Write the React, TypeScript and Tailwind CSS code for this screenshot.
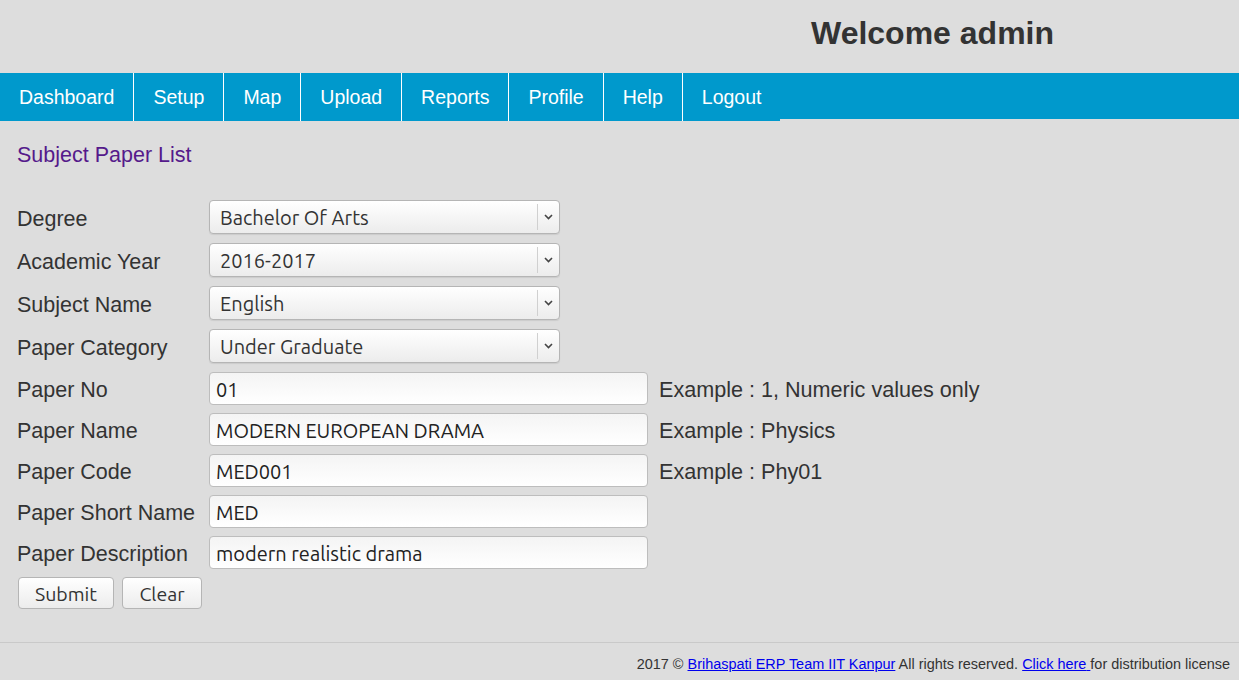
import React from "react";

const navItems = ["Dashboard", "Setup", "Map", "Upload", "Reports", "Profile", "Help", "Logout"];

const selects = [
  { label: "Degree", value: "Bachelor Of Arts" },
  { label: "Academic Year", value: "2016-2017" },
  { label: "Subject Name", value: "English" },
  { label: "Paper Category", value: "Under Graduate" },
];

const inputs = [
  { label: "Paper No", value: "01", hint: "Example : 1, Numeric values only" },
  { label: "Paper Name", value: "MODERN EUROPEAN DRAMA", hint: "Example : Physics" },
  { label: "Paper Code", value: "MED001", hint: "Example : Phy01" },
  { label: "Paper Short Name", value: "MED", hint: "" },
  { label: "Paper Description", value: "modern realistic drama", hint: "" },
];

const ctrlFont = "font-['Ubuntu','Open_Sans',sans-serif]";

function Chevron() {
  return (
    <svg width="9" height="6" viewBox="0 0 9 6" fill="none">
      <path d="M1 1L4.5 4.5L8 1" stroke="#444" strokeWidth="1.6" />
    </svg>
  );
}

export default function App() {
  return (
    <div className="min-h-[680px] bg-[#dddddd] font-['Liberation_Sans',Arial,sans-serif] text-[#333333]">
      {/* header */}
      <div className="h-[73px] flex items-center pl-[811px] pb-[6px]">
        <h1 className="text-[32px] font-bold leading-[37px] text-[#333333]">Welcome admin</h1>
      </div>

      {/* nav */}
      <div className="h-[46px] bg-[#0099cc]">
        <ul className="flex h-[48px]">
          {navItems.map((n) => (
            <li
              key={n}
              className="flex items-center px-[19px] pt-[2px] bg-[#0099cc] border-r border-white last:border-r-0 text-[19.5px] text-white"
            >
              {n}
            </li>
          ))}
        </ul>
      </div>

      {/* content */}
      <div className="px-[17px]">
        <div className="mt-[24px] h-[24px] flex items-center text-[21.5px] text-[#551a8b]">Subject Paper List</div>

        <div className="mt-[33px] flex flex-col">
          {selects.map((s) => (
            <div key={s.label} className="flex items-center h-[34px] mb-[9px]">
              <div className="w-[192px] pt-[4px] text-[21.5px] text-[#333333]">{s.label}</div>
              <div
                className={`flex items-center w-[351px] h-[34px] rounded-[4px] border border-[#b5b5b5] bg-gradient-to-b from-white to-[#ececec] shadow-[0_1px_1px_rgba(0,0,0,0.08)] ${ctrlFont}`}
              >
                <div className="flex-1 pl-[10px] pt-[2px] text-[20px] text-[#333333]">{s.value}</div>
                <div className="w-px h-[26px] bg-[#d0d0d0]" />
                <div className="w-[21px] flex justify-center">
                  <Chevron />
                </div>
              </div>
            </div>
          ))}

          {inputs.map((r) => (
            <div key={r.label} className="flex items-center h-[33px] mb-[8px]">
              <div className="w-[192px] pt-[3px] text-[21.5px] text-[#333333] whitespace-nowrap">{r.label}</div>
              <div
                className={`flex items-center w-[439px] h-[33px] rounded-[4px] border border-[#bdbdbd] bg-gradient-to-b from-[#f4f4f4] to-white px-[6px] pt-[3px] text-[20px] text-[#222222] ${ctrlFont}`}
              >
                {r.value}
              </div>
              {r.hint && <div className="ml-[11px] pt-[3px] text-[21.6px] text-[#333333]">{r.hint}</div>}
            </div>
          ))}

          <div className={`flex gap-[8px] pl-px ${ctrlFont}`}>
            <button className="w-[96px] h-[32px] pt-[2px] rounded-[4px] border border-[#b5b5b5] bg-gradient-to-b from-white to-[#ececec] text-[19.5px] text-[#333333]">
              Submit
            </button>
            <button className="w-[80px] h-[32px] pt-[2px] rounded-[4px] border border-[#b5b5b5] bg-gradient-to-b from-white to-[#ececec] text-[19.5px] text-[#333333]">
              Clear
            </button>
          </div>
        </div>
      </div>

      {/* footer */}
      <div className="mt-[33px] border-t border-[#c9c9c9] pt-[13px] pr-[9px] text-right text-[14.45px] leading-[16px] text-[#333333]">
        2017 ©{" "}
        <a href="#" className="text-[#0000ee] underline">
          Brihaspati ERP Team IIT Kanpur
        </a>{" "}
        All rights reserved.{" "}
        <a href="#" className="text-[#0000ee] underline">
          Click here{" "}
        </a>
        for distribution license
      </div>
    </div>
  );
}
